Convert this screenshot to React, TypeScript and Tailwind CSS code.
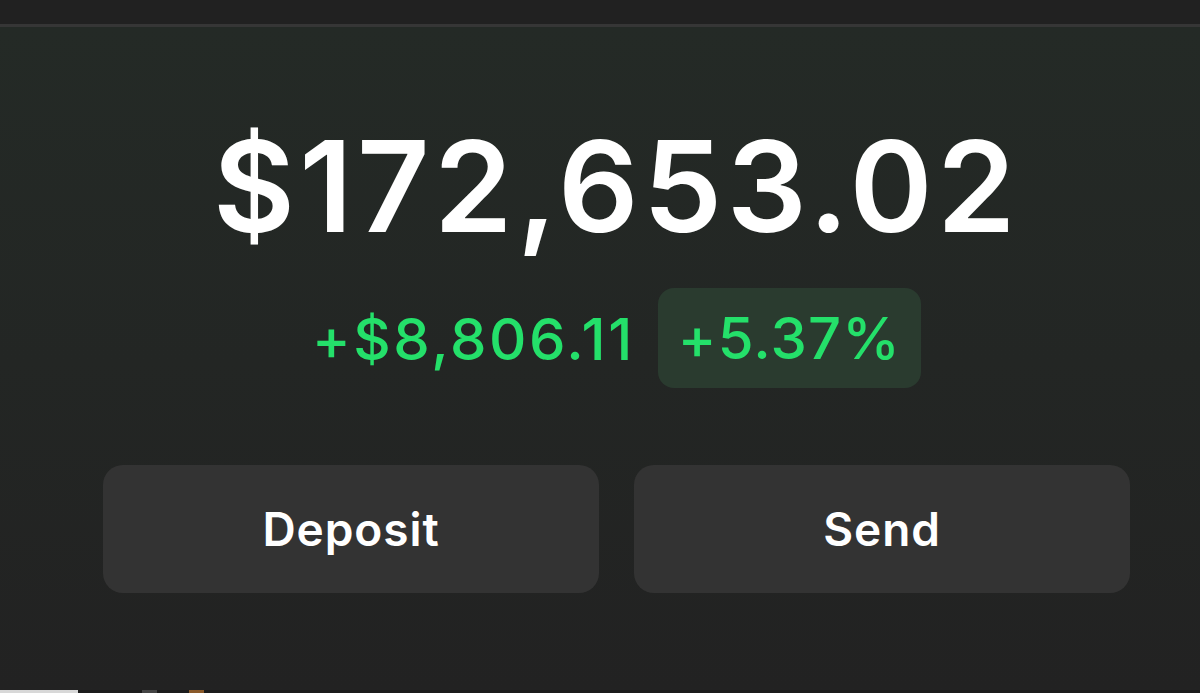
import React from 'react';

const ActionButton: React.FC<{ label: string }> = ({ label }) => (
  <button className="flex-1 h-[128px] rounded-[20px] bg-[#333333] text-white text-[46px] font-semibold tracking-[0.02em]">
    {label}
  </button>
);

const App: React.FC = () => {
  return (
    <div className="w-[1200px] h-[693px] flex flex-col bg-[#222222] overflow-hidden" style={{ fontFamily: 'Inter, "Noto Sans", sans-serif' }}>
      {/* Top bar */}
      <div className="h-[24px] bg-[#212121]" />
      <div className="h-[3px] bg-[#363636]" />

      {/* Balance panel */}
      <main className="flex-1 bg-gradient-to-b from-[#242a26] via-[#232624] to-[#222222]">
        <div className="ml-[103px] w-[1027px] flex flex-col items-center">
          <h1 className="mt-[96px] text-[126px] leading-none font-semibold text-white tracking-[0.035em]">
            $172,653.02
          </h1>

          <div className="mt-[39px] flex items-center gap-[23px]">
            <span className="mt-[2px] text-[58px] leading-none font-medium text-[#24e06a] tracking-[0.045em]">+$8,806.11</span>
            <span className="px-[20px] h-[100px] flex items-center rounded-[16px] bg-[#2a3b2f] text-[58px] leading-none font-medium text-[#24e06a] tracking-[0.02em]">
              +5.37%
            </span>
          </div>

          <div className="mt-[77px] w-full flex gap-[35px]">
            <ActionButton label="Deposit" />
            <ActionButton label="Send" />
          </div>
        </div>
      </main>

      {/* Bottom strip */}
      <div className="h-[3px] flex bg-[#1b1b1b]">
        <div className="w-[78px] bg-[#d8d8d8]" />
        <div className="w-[64px]" />
        <div className="w-[15px] bg-[#444444]" />
        <div className="w-[32px]" />
        <div className="w-[15px] bg-[#8a5a2a]" />
      </div>
    </div>
  );
};

export default App;
